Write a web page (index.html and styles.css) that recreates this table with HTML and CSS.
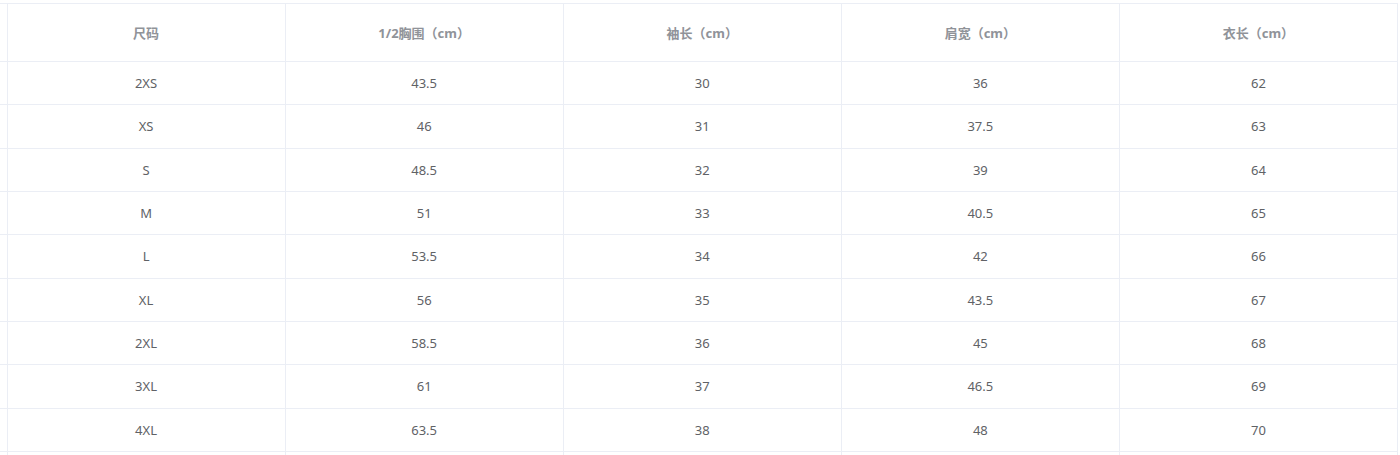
FILE: index.html
```html
<!DOCTYPE html>
<html lang="zh">
<head>
<meta charset="utf-8">
<link rel="stylesheet" href="styles.css">
</head>
<body>
<div class="wrap">
<table class="size-table">
  <colgroup>
    <col class="c-edge"><col class="c"><col class="c"><col class="c"><col class="c"><col class="c">
  </colgroup>
  <thead>
    <tr><th class="edge"></th><th>尺码</th><th>1/2胸围（cm）</th><th>袖长（cm）</th><th>肩宽（cm）</th><th>衣长（cm）</th></tr>
  </thead>
  <tbody>
    <tr><td class="edge"></td><td>2XS</td><td>43.5</td><td>30</td><td>36</td><td>62</td></tr>
    <tr><td class="edge"></td><td>XS</td><td>46</td><td>31</td><td>37.5</td><td>63</td></tr>
    <tr><td class="edge"></td><td>S</td><td>48.5</td><td>32</td><td>39</td><td>64</td></tr>
    <tr><td class="edge"></td><td>M</td><td>51</td><td>33</td><td>40.5</td><td>65</td></tr>
    <tr><td class="edge"></td><td>L</td><td>53.5</td><td>34</td><td>42</td><td>66</td></tr>
    <tr><td class="edge"></td><td>XL</td><td>56</td><td>35</td><td>43.5</td><td>67</td></tr>
    <tr><td class="edge"></td><td>2XL</td><td>58.5</td><td>36</td><td>45</td><td>68</td></tr>
    <tr><td class="edge"></td><td>3XL</td><td>61</td><td>37</td><td>46.5</td><td>69</td></tr>
    <tr><td class="edge"></td><td>4XL</td><td>63.5</td><td>38</td><td>48</td><td>70</td></tr>
    <tr><td class="edge"></td><td></td><td></td><td></td><td></td><td></td></tr>
  </tbody>
</table>
</div>
</body>
</html>
```

FILE: styles.css
```css
html, body {
  margin: 0;
  padding: 0;
  background: #fff;
  overflow: hidden;
  height: 455px;
}
.wrap {
  padding-top: 3px;
}
.size-table {
  border-collapse: collapse;
  table-layout: fixed;
  width: 1398px;
  font-family: "Noto Sans", "Noto Sans CJK SC", sans-serif;
  font-size: 13px;
  color: #606266;
}
.c-edge { width: 7px; }
.c { width: 278px; }
.size-table th,
.size-table td {
  border: 1px solid #ebeef5;
  text-align: center;
  padding: 0;
}
.size-table th.edge,
.size-table td.edge {
  border-left: none;
}
.size-table th {
  height: 57px;
  color: #909399;
  font-weight: bold;
  font-size: 13px;
}
.size-table td {
  height: 42.33px;
}
```
